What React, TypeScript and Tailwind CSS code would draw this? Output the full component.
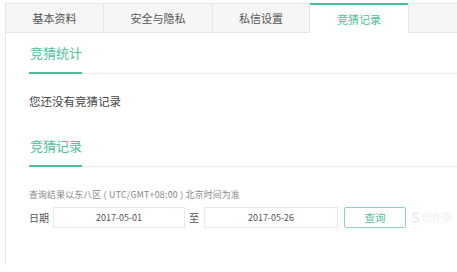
import React from 'react';

const font = { fontFamily: '"Noto Sans CJK SC", "Noto Sans", sans-serif' };

const tabs = [
  { label: '基本资料', width: 'w-[98px]', active: false },
  { label: '安全与隐私', width: 'w-[109px]', active: false },
  { label: '私信设置', width: 'w-[97px]', active: false },
  { label: '竞猜记录', width: 'w-[98px]', active: true },
];

const SectionTitle: React.FC<{ title: string }> = ({ title }) => (
  <div className="flex border-b border-[#ececec] pt-[11px]">
    <span className="-mb-px pb-[10px] pl-px border-b-2 border-[#4cbf9a] text-[13px] leading-[18px] text-[#4cbf9a]">
      {title}
    </span>
  </div>
);

export default function App() {
  return (
    <div className="relative w-[457px] h-[272px] overflow-hidden bg-white pt-[3px] pl-[5px]" style={font}>
      <div className="h-[262px] border-l border-[#e6e6e6]">
        {/* tab bar */}
        <div className="flex h-[30px]">
          {tabs.map((t) =>
            t.active ? (
              <div
                key={t.label}
                className={`${t.width} flex items-center justify-center bg-white border-t-2 border-[#43bf97] text-[11px] text-[#4cbf9a]`}
              >
                {t.label}
              </div>
            ) : (
              <div
                key={t.label}
                className={`${t.width} flex items-center justify-center bg-[#f6f6f6] border-y border-r border-[#e6e6e6] text-[11px] text-[#555]`}
              >
                {t.label}
              </div>
            )
          )}
          <div className="flex-1 bg-[#f6f6f6] border-y border-l border-[#e6e6e6]" />
        </div>

        {/* content */}
        <div className="pl-[23px]">
          <SectionTitle title="竞猜统计" />
          <p className="mt-[19px] text-[11.5px] leading-[16px] text-[#444]">您还没有竞猜记录</p>
          <div className="mt-[17px]">
            <SectionTitle title="竞猜记录" />
          </div>
          <p className="mt-[22px] text-[8.8px] tracking-[0.25px] leading-[12px] text-[#888] whitespace-nowrap">
            查询结果以东八区 ( UTC/GMT+08:00 ) 北京时间为准
          </p>
          <div className="mt-[6px] flex items-center h-[21px]">
            <span className="w-[24px] text-[10px] text-[#555]">日期</span>
            <div className="w-[132px] h-[21px] flex items-center justify-center border border-[#e8e8e8] text-[9px] text-[#555]">
              2017-05-01
            </div>
            <span className="ml-[4px] w-[15px] text-[10px] text-[#555]">至</span>
            <div className="w-[134px] h-[21px] flex items-center justify-center border border-[#e8e8e8] text-[9px] text-[#555]">
              2017-05-26
            </div>
            <button className="ml-[6px] w-[62px] h-[21px] flex items-center justify-center border border-[#8fd3bd] rounded-[2px] text-[10.5px] text-[#4cbf9a]">
              查询
            </button>
          </div>
        </div>
      </div>

      {/* watermark */}
      <div className="absolute left-[411px] top-[210px] flex items-center gap-[2px] text-[#efefef] whitespace-nowrap">
        <span className="text-[14px] font-bold leading-none">S</span>
        <span className="text-[10px] leading-none">创作指</span>
      </div>
    </div>
  );
}
